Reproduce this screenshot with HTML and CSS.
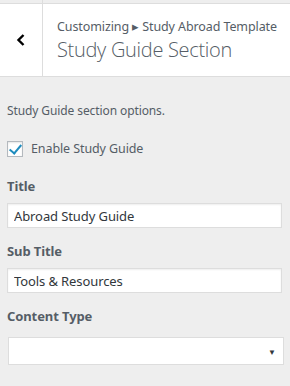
FILE: index.html
```html
<!DOCTYPE html>
<html lang="en">
<head>
	<meta charset="UTF-8">
	<title>Study Guide Section</title>
	<link rel="stylesheet" href="styles.css">
</head>
<body>
	<div class="strip"><span></span></div>
	<div class="section-head">
		<button class="back" type="button">
			<svg width="10" height="12" viewBox="0 0 10 12"><polyline points="7.5,1 2.5,6 7.5,11" fill="none" stroke="#000" stroke-width="2.4"/></svg>
		</button>
		<div class="head-title">
			<span class="crumb">Customizing &#9656; Study Abroad Template</span>
			<h3>Study Guide Section</h3>
		</div>
	</div>
	<ul class="controls">
		<li class="desc">Study Guide section options.</li>
		<li class="check">
			<label><input type="checkbox" checked> Enable Study Guide</label>
		</li>
		<li class="field">
			<span class="field-title">Title</span>
			<input type="text" value="Abroad Study Guide">
		</li>
		<li class="field">
			<span class="field-title">Sub Title</span>
			<input type="text" value="Tools &amp; Resources">
		</li>
		<li class="field">
			<span class="field-title">Content Type</span>
			<div class="select"><span class="arrow">&#9660;</span></div>
		</li>
	</ul>
</body>
</html>
```
FILE: styles.css
```css
*{
	margin: 0;
	padding: 0;
	box-sizing: border-box;
}
ul{
	list-style: none;
}
body{
	background: #eee;
	font-family: "Noto Sans", "Open Sans", sans-serif;
	color: #555d66;
}
.strip{
	height: 3px;
}
.strip>span{
	display: block;
	width: 43px;
	height: 3px;
	border-right: 1px solid #ddd;
}
.section-head{
	display: flex;
	height: 74px;
	background: #fff;
	border-top: 1px solid #ddd;
	border-bottom: 1px solid #ddd;
}
.back{
	width: 43px;
	border: 0;
	border-right: 1px solid #ddd;
	background: #fff;
	display: flex;
	align-items: center;
	justify-content: center;
	padding-bottom: 1px;
}
.head-title{
	padding: 13px 0 0 14px;
}
.crumb{
	display: block;
	font-size: 12.5px;
	line-height: 20px;
	letter-spacing: -0.1px;
}
.head-title h3{
	font-family: "Open Sans", "Noto Sans", sans-serif;
	font-size: 20px;
	font-weight: 300;
	line-height: 26px;
	letter-spacing: -0.3px;
	color: #555d66;
}
.controls{
	padding: 25px 7px 0 7px;
}
.desc{
	font-size: 12px;
	line-height: 18px;
	letter-spacing: -0.1px;
}
.check{
	margin-top: 20px;
}
.check label{
	display: flex;
	align-items: center;
	font-size: 12.5px;
	letter-spacing: -0.1px;
}
.check input{
	appearance: none;
	width: 16px;
	height: 16px;
	border: 1px solid #b4b9be;
	background: #fff;
	margin-right: 8px;
	position: relative;
	box-shadow: inset 0 1px 2px rgba(0,0,0,0.1);
}
.check input:checked::after{
	content: "";
	position: absolute;
	left: 4px;
	top: 0px;
	width: 5px;
	height: 10px;
	border-right: 2.5px solid #1e8cbe;
	border-bottom: 2.5px solid #1e8cbe;
	transform: rotate(40deg);
}
.field{
	margin-top: 14px;
}
.check+.field{
	margin-top: 20px;
}
.field-title{
	display: block;
	font-size: 13px;
	font-weight: 700;
	line-height: 18px;
	margin-bottom: 8px;
	letter-spacing: -0.1px;
}
.field input{
	display: block;
	width: 275px;
	height: 25px;
	border: 1px solid #ddd;
	background: #fff;
	padding: 0 6px;
	font-family: "Noto Sans", "Open Sans", sans-serif;
	font-size: 13px;
	color: #32373c;
	letter-spacing: -0.1px;
	box-shadow: inset 0 1px 2px rgba(0,0,0,0.07);
}
.select{
	width: 276px;
	height: 28px;
	margin: 12px 0 0 1px;
	border: 1px solid #ddd;
	background: #fff;
	display: flex;
	align-items: center;
	justify-content: flex-end;
	padding-right: 7px;
}
.arrow{
	font-size: 8px;
	color: #32373c;
}
```
